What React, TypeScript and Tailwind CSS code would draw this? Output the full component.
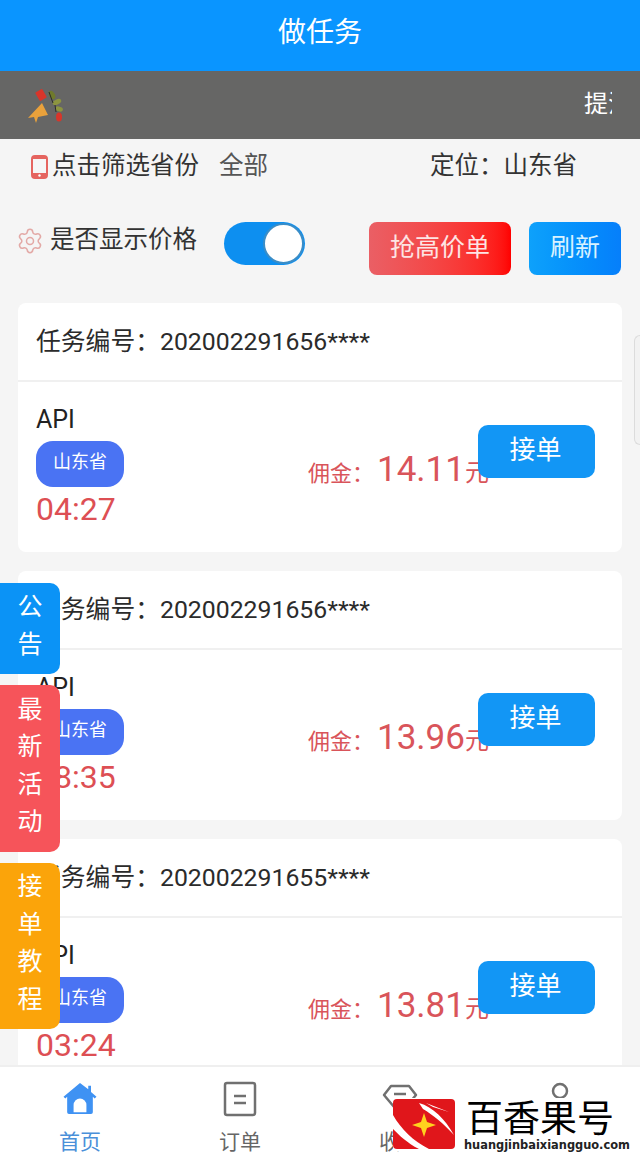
import { Settings } from "lucide-react";

const orders = [
  { no: "202002291656****", price: "14.11", time: "04:27" },
  { no: "202002291656****", price: "13.96", time: "08:35" },
  { no: "202002291655****", price: "13.81", time: "03:24" },
];

function OrderCard({ no, price, time }: { no: string; price: string; time: string }) {
  return (
    <div className="mb-[19px] h-[249px] shrink-0 rounded-lg bg-white">
      <div className="flex h-[79px] items-center border-b-2 border-[#f0f0f0] pl-[18px] text-[24.8px] text-[#2b2b2b]">
        任务编号：{no}
      </div>
      <div className="flex pl-[18px]">
        <div className="w-[178px] pt-[21px]">
          <div className="text-[25px] leading-[33px] text-[#222]">API</div>
          <div className="mt-[5px] flex h-[46px] w-[88px] items-center justify-center rounded-[17px] bg-[#4a73f3] pb-[5px] text-[18px] text-white">
            山东省
          </div>
          <div className="mt-[1px] text-[32px] leading-[42px] text-[#dd4f54]">{time}</div>
        </div>
        <div className="mt-[62px] ml-[94px] flex h-[50px] shrink-0 items-baseline whitespace-nowrap text-[#d9545a]">
          <span className="w-[69px] text-[22px]">佣金：</span>
          <span className="text-[35px]">{price}</span>
          <span className="text-[24px]">元</span>
        </div>
        <button className="relative mt-[43px] -ml-[11px] h-[53px] w-[117px] shrink-0 rounded-[10px] bg-[#1296f5] pr-[2px] pb-[2px] text-[26px] text-white">
          接单
        </button>
      </div>
    </div>
  );
}

function SideTab({ label, className }: { label: string; className: string }) {
  return (
    <div className={`flex w-[60px] flex-col items-center justify-center rounded-r-[10px] pb-[6px] text-[25px] leading-[37.5px] text-white ${className}`}>
      {label.split("").map((c, i) => (
        <span key={i}>{c}</span>
      ))}
    </div>
  );
}

export default function App() {
  return (
    <div
      className="relative flex h-[1154px] w-[640px] flex-col overflow-hidden bg-[#f5f5f5]"
      style={{ fontFamily: 'Roboto, "Noto Sans CJK SC", sans-serif' }}
    >
      <div className="flex h-[71px] shrink-0 items-center justify-center bg-[#0a95ff] pb-[6px] text-[28px] text-white">
        做任务
      </div>

      <div className="flex h-[68px] shrink-0 items-center justify-between bg-[#666665] pr-[28px] pl-[27px]">
        <svg width="38" height="38" viewBox="0 0 38 38">
          <path d="M1 32 L15 17 L21 29 L11 31 L9 37 L7 31 Z" fill="#e9a13b" />
          <rect x="10" y="4" width="8" height="10" rx="1" fill="#d8352a" transform="rotate(-30 14 9)" />
          <ellipse cx="25" cy="9" rx="2.8" ry="4.5" fill="#6f7a2c" transform="rotate(-30 25 9)" />
          <ellipse cx="30" cy="16" rx="4.5" ry="2.6" fill="#8c9440" transform="rotate(-25 30 16)" />
          <ellipse cx="32" cy="23" rx="4" ry="2.4" fill="#8c9440" transform="rotate(15 32 23)" />
          <ellipse cx="32" cy="31" rx="3" ry="4.5" fill="#d8352a" />
          <path d="M22 6 L26 17 M28 19 L29 26" stroke="#2b2b2b" strokeWidth="1" fill="none" />
        </svg>
        <div className="w-[28px] overflow-hidden pb-[3px] text-[24px] whitespace-nowrap text-white">提注意</div>
      </div>

      <div className="flex h-[53px] shrink-0 items-center pt-[2px] pl-[31px] text-[24.5px] text-[#333]">
        <svg width="17" height="24" viewBox="0 0 17 24" className="mr-[4px]">
          <rect x="1" y="1" width="15" height="22" rx="3" fill="none" stroke="#e5645f" strokeWidth="2" />
          <rect x="1" y="18" width="15" height="5" rx="1" fill="#e5645f" />
          <rect x="1" y="1" width="15" height="3" rx="1" fill="#e5645f" />
          <circle cx="8.5" cy="20.5" r="1.2" fill="#fff" />
        </svg>
        <span>点击筛选省份</span>
        <span className="ml-[20px] text-[#555]">全部</span>
        <span className="ml-[162px]">定位：山东省</span>
      </div>

      <div className="mt-[30px] flex h-[53px] shrink-0 items-start pl-[16px]">
        <div className="flex h-[37px] items-center text-[24.5px] text-[#333]">
          <Settings size={28} strokeWidth={1.3} color="#e3a9a6" className="mr-[6px]" />
          <span>是否显示价格</span>
        </div>
        <div className="ml-[27px] flex h-[43px] w-[81px] items-center justify-end rounded-full bg-[#0d8ff0] pr-[1px]">
          <div className="h-[41px] w-[41px] rounded-full border-2 border-[#3a8dc7] bg-white" />
        </div>
        <button className="ml-[64px] h-[53px] w-[142px] rounded-lg bg-gradient-to-r from-[#ea5f65] to-[#ff0000] pb-[2px] text-[25px] text-[#fde4e4]">
          抢高价单
        </button>
        <button className="ml-[18px] h-[53px] w-[92px] rounded-lg bg-gradient-to-r from-[#0ea1fb] to-[#067ffb] pb-[2px] text-[25px] text-[#d8f2ff]">
          刷新
        </button>
      </div>

      <div className="mt-[28px] flex min-h-0 flex-1 flex-col overflow-hidden border-b-2 border-[#efefef] px-[18px]">
        {orders.map((o, i) => (
          <OrderCard key={i} {...o} />
        ))}
      </div>

      <nav className="flex h-[87px] shrink-0 bg-white text-[21px] text-[#666]">
        <div className="flex w-[160px] flex-col items-center pt-[15px] text-[#4a90d9]">
          <svg width="34" height="33" viewBox="0 0 36 36" className="shrink-0">
            <path d="M18 1 L27 8 V4 H30 V11 L36 16 L34 18 L32 16 V33 Q32 35 30 35 H6 Q4 35 4 33 V16 L2 18 L0 16 Z" fill="#3f92f3" />
            <path d="M11 33 V25 A7 7 0 0 1 25 25 V33 Z" fill="#fff" />
          </svg>
          <span className="mt-[13px] shrink-0 leading-[28px]">首页</span>
        </div>
        <div className="flex w-[160px] flex-col items-center pt-[14px]">
          <svg width="36" height="36" viewBox="0 0 36 36" fill="none" stroke="#707070" strokeWidth="2.5" className="shrink-0">
            <rect x="3" y="2" width="30" height="32" rx="2" />
            <path d="M12 15 H24 M12 22 H24" />
          </svg>
          <span className="mt-[11px] shrink-0 leading-[28px]">订单</span>
        </div>
        <div className="flex w-[160px] flex-col items-center pt-[14px]">
          <svg width="36" height="36" viewBox="0 0 36 36" fill="none" stroke="#707070" strokeWidth="2.5" className="shrink-0">
            <path d="M9 5 H27 L34 14 L18 33 L2 14 Z" strokeLinejoin="round" />
            <path d="M12 13 H24" />
          </svg>
          <span className="mt-[11px] shrink-0 leading-[28px]">收益</span>
        </div>
        <div className="flex w-[160px] flex-col items-center pt-[14px]">
          <svg width="36" height="36" viewBox="0 0 36 36" fill="none" stroke="#707070" strokeWidth="2.5" className="shrink-0">
            <circle cx="18" cy="10" r="7" />
            <path d="M4 34 C4 24 10 20 18 20 C26 20 32 24 32 34" />
          </svg>
        </div>
      </nav>

      <div className="absolute top-[335px] right-0 h-[110px] w-[6px] rounded-l-md border border-r-0 border-[#dcdcdc] bg-[#f2f2f2]" />

      <div className="absolute top-[583px] left-0 flex flex-col">
        <SideTab label="公告" className="h-[91px] bg-[#0b93f6]" />
        <SideTab label="最新活动" className="mt-[11px] h-[167px] bg-[#f6545a]" />
        <SideTab label="接单教程" className="mt-[11px] h-[166px] bg-[#fba40a]" />
      </div>

      <div className="absolute top-[1098px] left-[393px] flex h-[53px] w-[247px] bg-white">
        <svg width="62" height="50" viewBox="0 0 62 50" className="mt-[1px] shrink-0">
          <rect width="62" height="50" rx="4" fill="#e0161b" />
          <path d="M0 16 C8 30 20 42 36 50 H26 C14 44 6 36 0 30 Z" fill="#fff" />
          <path d="M26 4 C40 8 52 20 61 36 C50 24 40 16 30 10 Z M33 4 L56 13 L40 8 Z" fill="#fff" />
          <path d="M31 14 L34 23 L43 26 L34 29 L31 38 L28 29 L19 26 L28 23 Z" fill="#ffd21e" />
        </svg>
        <div className="ml-[11px] flex min-w-0 flex-col">
          <div className="mt-[3px] text-[37px] leading-[38px] whitespace-nowrap text-black">百香果号</div>
          <div className="-ml-[2px] text-[11.4px] leading-[12px] font-bold whitespace-nowrap text-[#222]" style={{ fontFamily: '"DejaVu Sans", sans-serif' }}>
            huangjinbaixiangguo.com
          </div>
        </div>
      </div>
    </div>
  );
}
